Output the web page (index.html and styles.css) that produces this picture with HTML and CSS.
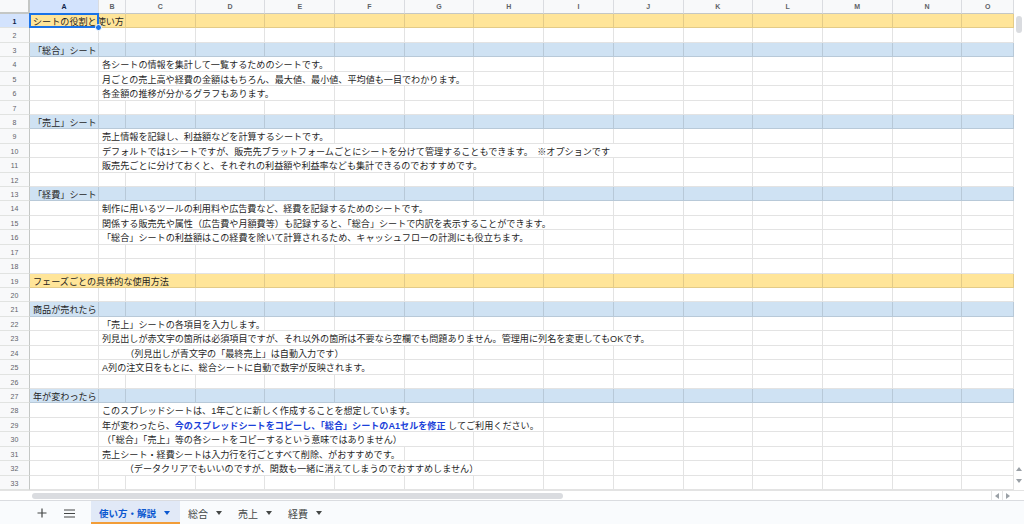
FILE: index.html
```html
<!DOCTYPE html>
<html lang="ja">
  <head>
    <meta charset="UTF-8" />
    <meta name="viewport" content="width=device-width, initial-scale=1.0" />
    <title>使い方・解説</title>
    <link rel="stylesheet" href="styles.css">
  </head>
  <body>
    <div class="main">
      <div class="sheet" id="sheet">
        <!-- Column headers -->
        <div class="row head" id="colHead"></div>
      </div>

      <!-- Vertical scrollbar -->
      <div class="vbar">
        <div class="vthumb"></div>
        <div class="vspace"></div>
        <svg class="varrow" width="6" height="4" viewBox="0 0 6 4"><path d="M0 4 L3 0 L6 4 Z" fill="#9aa0a6"/></svg>
        <svg class="varrow" width="6" height="4" viewBox="0 0 6 4"><path d="M0 0 L3 4 L6 0 Z" fill="#9aa0a6"/></svg>
      </div>
    </div>

    <!-- Horizontal scrollbar -->
    <div class="hbar">
      <div class="hthumb"></div>
      <div class="hspace"></div>
      <div class="harrow">
        <svg width="4" height="6" viewBox="0 0 4 6"><path d="M4 0 L0 3 L4 6 Z" fill="#9aa0a6"/></svg>
      </div>
      <div class="harrow">
        <svg width="4" height="6" viewBox="0 0 4 6"><path d="M0 0 L4 3 L0 6 Z" fill="#9aa0a6"/></svg>
      </div>
    </div>

    <!-- Sheet tabs -->
    <div class="tabs">
      <div class="tab-btn">
        <svg width="10" height="10" viewBox="0 0 10 10"><path d="M5 0.5 V9.5 M0.5 5 H9.5" stroke="#444746" stroke-width="1.2"/></svg>
      </div>
      <div class="tab-btn">
        <svg width="11" height="9" viewBox="0 0 11 9"><path d="M0 1 H11 M0 4.5 H11 M0 8 H11" stroke="#444746" stroke-width="1.2"/></svg>
      </div>
      <div class="tab active">
        <span>使い方・解説</span>
        <svg width="6" height="4" viewBox="0 0 6 4"><path d="M0 0 L3 4 L6 0 Z" fill="#0b57d0"/></svg>
      </div>
      <div class="tab">
        <span>総合</span>
        <svg width="6" height="4" viewBox="0 0 6 4"><path d="M0 0 L3 4 L6 0 Z" fill="#444746"/></svg>
      </div>
      <div class="tab">
        <span>売上</span>
        <svg width="6" height="4" viewBox="0 0 6 4"><path d="M0 0 L3 4 L6 0 Z" fill="#444746"/></svg>
      </div>
      <div class="tab">
        <span>経費</span>
        <svg width="6" height="4" viewBox="0 0 6 4"><path d="M0 0 L3 4 L6 0 Z" fill="#444746"/></svg>
      </div>
    </div>

    <script>
      const LETTERS = "ABCDEFGHIJKLMNO".split("");

      // [column, span, text]
      const ROWS = {
        1: { fill: "yellow", sel: true, cells: [[1, 1, "シートの役割と使い方"]] },
        3: { fill: "blue", cells: [[1, 1, "「総合」シート"]] },
        4: { cells: [[2, 4, "各シートの情報を集計して一覧するためのシートです。"]] },
        5: { cells: [[2, 6, "月ごとの売上高や経費の金額はもちろん、最大値、最小値、平均値も一目でわかります。"]] },
        6: { cells: [[2, 4, "各金額の推移が分かるグラフもあります。"]] },
        8: { fill: "blue", cells: [[1, 1, "「売上」シート"]] },
        9: { cells: [[2, 4, "売上情報を記録し、利益額などを計算するシートです。"]] },
        10: { cells: [[2, 9, "デフォルトでは1シートですが、販売先プラットフォームごとにシートを分けて管理することもできます。　※オプションです"]] },
        11: { cells: [[2, 7, "販売先ごとに分けておくと、それぞれの利益額や利益率なども集計できるのでおすすめです。"]] },
        13: { fill: "blue", cells: [[1, 1, "「経費」シート"]] },
        14: { cells: [[2, 6, "制作に用いるツールの利用料や広告費など、経費を記録するためのシートです。"]] },
        15: { cells: [[2, 8, "関係する販売先や属性（広告費や月額費等）も記録すると、「総合」シートで内訳を表示することができます。"]] },
        16: { cells: [[2, 7, "「総合」シートの利益額はこの経費を除いて計算されるため、キャッシュフローの計測にも役立ちます。"]] },
        19: { fill: "yellow", cells: [[1, 3, "フェーズごとの具体的な使用方法"]] },
        21: { fill: "blue", cells: [[1, 1, "商品が売れたら"]] },
        22: { cells: [[2, 3, "「売上」シートの各項目を入力します。"]] },
        23: { cells: [[2, 9, "列見出しが赤文字の箇所は必須項目ですが、それ以外の箇所は不要なら空欄でも問題ありません。管理用に列名を変更してもOKです。"]] },
        24: { cells: [[2, 5, "　　  （列見出しが青文字の「最終売上」は自動入力です）"]] },
        25: { cells: [[2, 5, "A列の注文日をもとに、総合シートに自動で数字が反映されます。"]] },
        27: { fill: "blue", cells: [[1, 1, "年が変わったら"]] },
        28: { cells: [[2, 6, "このスプレッドシートは、1年ごとに新しく作成することを想定しています。"]] },
        29: { cells: [[2, 7, "年が変わったら、<b class=\"link\">今のスプレッドシートをコピーし、「総合」シートのA1セルを修正</b> してご利用ください。"]] },
        30: { cells: [[2, 6, "（「総合」「売上」等の各シートをコピーするという意味ではありません）"]] },
        31: { cells: [[2, 5, "売上シート・経費シートは入力行を行ごとすべて削除、がおすすめです。"]] },
        32: { cells: [[2, 7, "　　　（データクリアでもいいのですが、関数も一緒に消えてしまうのでおすすめしません）"]] }
      };

      // Column header row
      let head = '<div class="corner"></div>';
      LETTERS.forEach((l, i) => {
        head += `<div class="ch${i === 0 ? " active" : ""}">${l}</div>`;
      });
      document.getElementById("colHead").innerHTML = head;

      // Data rows
      const sheet = document.getElementById("sheet");
      let html = "";
      for (let r = 1; r <= 33; r++) {
        const data = ROWS[r] || { cells: [] };
        html += `<div class="row${data.fill ? " " + data.fill : ""}">`;
        html += `<div class="rh${r === 1 ? " active" : ""}">${r}</div>`;
        let c = 1;
        while (c <= 15) {
          const hit = data.cells.find((x) => x[0] === c);
          if (hit) {
            const cls = data.sel ? "cell text sel" : "cell text";
            const handle = data.sel ? '<span class="handle"></span>' : "";
            html += `<div class="${cls}" style="grid-column: span ${hit[1]}">${hit[2]}${handle}</div>`;
            c += hit[1];
          } else {
            html += '<div class="cell"></div>';
            c++;
          }
        }
        html += "</div>";
      }
      sheet.insertAdjacentHTML("beforeend", html);
    </script>
  </body>
</html>
```

FILE: styles.css
```css
body {
  margin: 0;
  width: 1024px;
  height: 524px;
  overflow: hidden;
  background: #ffffff;
  font-family: "Liberation Sans", "Noto Sans CJK JP", sans-serif;
  color: #1f1f1f;
}

.main {
  display: flex;
  height: 490px;
}

.sheet {
  width: 1014px;
  display: flex;
  flex-direction: column;
}

/* Grid rows */
.row {
  display: grid;
  grid-template-columns: 30px 69px 27px repeat(12, 69.7px) 1fr;
  grid-template-rows: 100%;
  height: 14.43px;
  flex-shrink: 0;
}

.row.head {
  height: 14px;
}

.row.yellow .cell {
  background: #ffe599;
}

.row.blue .cell {
  background: #cfe2f3;
}

.corner {
  background: #f8f9fa;
  border-right: 2px solid #c4c7c5;
  border-bottom: 2px solid #c4c7c5;
  box-sizing: border-box;
}

.ch {
  background: #f8f9fa;
  border-right: 1px solid #dadce0;
  border-bottom: 1px solid #c4c7c5;
  box-sizing: border-box;
  font-size: 7px;
  font-weight: bold;
  color: #5f6368;
  display: flex;
  justify-content: center;
  align-items: center;
}

.ch.active {
  background: #d3e3fd;
  color: #0b1f4a;
}

.rh {
  background: #f8f9fa;
  border-right: 1px solid #c4c7c5;
  border-bottom: 1px solid #e1e3e1;
  box-sizing: border-box;
  font-size: 7px;
  line-height: 16px;
  color: #5f6368;
  text-align: center;
  overflow: visible;
}

.rh.active {
  background: #d3e3fd;
  color: #0b1f4a;
  font-weight: bold;
}

.cell {
  border-right: 1px solid rgba(0, 0, 0, 0.11);
  border-bottom: 1px solid rgba(0, 0, 0, 0.11);
  box-sizing: border-box;
  min-width: 0;
}

.cell.text {
  font-size: 9.1px;
  line-height: 16px;
  padding-left: 3px;
  white-space: pre;
  overflow: visible;
}

.link {
  color: #1a3fd9;
  font-weight: bold;
}

/* Selected A1 */
.cell.sel {
  position: relative;
  z-index: 2;
}

.cell.sel::after {
  content: "";
  position: absolute;
  top: -1px;
  left: -1px;
  right: -1px;
  bottom: -1px;
  border: 2px solid #1a73e8;
}

.handle {
  position: absolute;
  right: -4px;
  bottom: -4px;
  width: 5px;
  height: 5px;
  border-radius: 50%;
  background: #1a73e8;
  border: 1px solid #ffffff;
  z-index: 3;
}

/* Scrollbars */
.vbar {
  flex: 1;
  display: flex;
  flex-direction: column;
  align-items: center;
  padding-top: 16px;
  padding-bottom: 3px;
  background: #ffffff;
}

.vthumb {
  width: 6px;
  height: 17px;
  border-radius: 3px;
  background: #dadce0;
}

.vspace {
  flex: 1;
}

.varrow {
  margin: 4px 0;
}

.hbar {
  display: flex;
  align-items: center;
  height: 9px;
  border-top: 1px solid #e3e3e3;
  border-bottom: 1px solid #dadce0;
  padding-left: 32px;
  padding-right: 11px;
}

.hthumb {
  width: 531px;
  height: 6px;
  border-radius: 3px;
  background: #dadce0;
}

.hspace {
  flex: 1;
}

.harrow {
  width: 10px;
  height: 9px;
  border-left: 1px solid #e3e3e3;
  display: flex;
  justify-content: center;
  align-items: center;
}

/* Sheet tabs */
.tabs {
  display: flex;
  height: 24px;
  background: #f9fbfd;
  padding-left: 32px;
}

.tab-btn {
  width: 20px;
  margin-right: 7px;
  display: flex;
  justify-content: center;
  align-items: center;
}

.tab-btn + .tab-btn {
  margin-right: 12px;
}

.tab {
  display: flex;
  align-items: center;
  gap: 8px;
  padding: 0 8px;
  font-size: 10px;
  color: #444746;
  white-space: nowrap;
  box-sizing: border-box;
}

.tab.active {
  width: 89px;
  background: #e1e9f7;
  color: #0b57d0;
  font-size: 9.5px;
  font-weight: bold;
  border-bottom: 3px solid #f29d38;
  padding-top: 3px;
}
```
